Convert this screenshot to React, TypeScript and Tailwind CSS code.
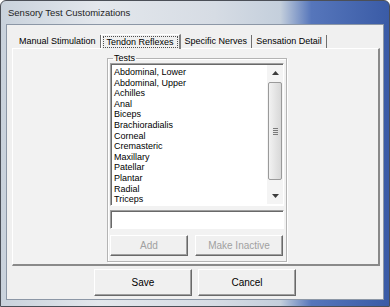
import React from "react";

const tests = [
  "Abdominal, Lower",
  "Abdominal, Upper",
  "Achilles",
  "Anal",
  "Biceps",
  "Brachioradialis",
  "Corneal",
  "Cremasteric",
  "Maxillary",
  "Patellar",
  "Plantar",
  "Radial",
  "Triceps",
];

const tabs = ["Manual Stimulation", "Tendon Reflexes", "Specific Nerves", "Sensation Detail"];

// classic 3D button
const Btn: React.FC<{ label: string; w: string; h: string; disabled?: boolean }> = ({ label, w, h, disabled }) => (
  <div className={`${w} ${h} border border-t-[#ffffff] border-l-[#ffffff] border-r-[#696969] border-b-[#696969] shadow-[inset_-1px_-1px_0_#a0a0a0] bg-[#f0f0f0] flex items-center justify-center`}>
    <span className={disabled ? "text-[#a0a0a0]" : "text-black"}>{label}</span>
  </div>
);

const App: React.FC = () => {
  return (
    <div
      className="w-[390px] h-[307px] overflow-hidden rounded-t-[6px] border border-[#4b4f57] bg-[linear-gradient(to_right,#c9d2dc_0%,#e3e7ec_25%,#d6dce4_55%,#c4cfdc_72%,#5676bb_80%,#3a5ba6_100%)] flex flex-col text-[9px] leading-[11px] text-black"
      style={{ fontFamily: '"Liberation Sans", Arial, sans-serif' }}
    >
      {/* title bar */}
      <div className="h-[23px] flex items-center pl-[7px] text-[9.5px] text-[#1e1e1e]">Sensory Test Customizations</div>

      {/* client area */}
      <div className="mx-[5px] mb-[6px] flex-1 border border-[#8c97a6] bg-[#f0f0f0] flex flex-col">
        <div className="ml-[5px] mr-[3px] mt-[8px] flex flex-col">
          {/* tabs */}
          <div className="flex h-[15px] items-end pl-[3px]">
            {tabs.map((t, i) =>
              i === 1 ? (
                <div
                  key={t}
                  className="h-[15px] px-[1px] pt-[1px] border-t border-l border-[#ffffff] border-r-2 border-r-[#808080] bg-[#f0f0f0] -mb-[1px] relative z-10"
                >
                  <div className="border border-dotted border-[#505050] px-[3px] h-[12px] leading-[11px]">{t}</div>
                </div>
              ) : (
                <div key={t} className="h-[13px] px-[4px] leading-[13px] border-r border-[#707070]">
                  {t}
                </div>
              )
            )}
          </div>

          {/* tab panel */}
          <div className="h-[218px] border-t border-l border-[#ffffff] border-r-2 border-b-2 border-r-[#8a8a8a] border-b-[#8a8a8a] bg-[#f2f2f2] pt-[5px] pl-[94px]">
            {/* group box */}
            <fieldset className="w-[180px] h-[208px] border border-[#b4b4b4] shadow-[1px_1px_0_#ffffff,inset_1px_1px_0_#ffffff] px-[2px] pb-[3px] m-0">
              <legend className="ml-[3px] px-[1px] leading-[9px]">Tests</legend>
              <div className="flex flex-col">
                {/* list box */}
                <div className="h-[143px] border border-t-[#a0a0a0] border-l-[#a0a0a0] border-r-[#ffffff] border-b-[#ffffff] shadow-[inset_1px_1px_0_#696969] bg-white flex">
                  <div className="flex-1 pl-[3px] pt-[3px] leading-[10.6px]">
                    {tests.map((t) => (
                      <div key={t}>{t}</div>
                    ))}
                  </div>
                  <div className="w-[16px] mt-[1px] mb-[1px] bg-[#f4f4f4] flex flex-col items-center">
                    <div className="h-[16px] w-[16px] flex items-center justify-center">
                      <svg width="7" height="4" viewBox="0 0 7 4">
                        <path d="M0 4 L3.5 0 L7 4 Z" fill="#3c3c3c" />
                      </svg>
                    </div>
                    <div className="w-[14px] h-[98px] mt-[1px] rounded-[2px] border border-[#9a9a9a] bg-[linear-gradient(to_right,#f2f2f2,#d8d8d8)] flex items-center justify-center">
                      <div className="flex flex-col gap-[1px]">
                        <div className="w-[5px] h-px bg-[#7a7a7a]" />
                        <div className="w-[5px] h-px bg-[#7a7a7a]" />
                        <div className="w-[5px] h-px bg-[#7a7a7a]" />
                        <div className="w-[5px] h-px bg-[#7a7a7a]" />
                      </div>
                    </div>
                    <div className="flex-1" />
                    <div className="h-[16px] w-[16px] flex items-center justify-center">
                      <svg width="7" height="4" viewBox="0 0 7 4">
                        <path d="M0 0 L7 0 L3.5 4 Z" fill="#3c3c3c" />
                      </svg>
                    </div>
                  </div>
                </div>

                {/* text box */}
                <div className="mt-[4px] h-[19px] border border-t-[#a0a0a0] border-l-[#a0a0a0] border-r-[#ffffff] border-b-[#ffffff] shadow-[inset_1px_1px_0_#696969] bg-white" />

                <div className="mt-[6px] flex gap-[7px] text-[10px]">
                  <Btn label="Add" w="w-[78px]" h="h-[21px]" disabled />
                  <Btn label="Make Inactive" w="w-[88px]" h="h-[21px]" disabled />
                </div>
              </div>
            </fieldset>
          </div>
        </div>

        {/* bottom buttons */}
        <div className="mt-[3px] flex justify-center gap-[6px] text-[10px]">
          <Btn label="Save" w="w-[98px]" h="h-[27px]" />
          <Btn label="Cancel" w="w-[98px]" h="h-[27px]" />
        </div>
      </div>
    </div>
  );
};

export default App;
